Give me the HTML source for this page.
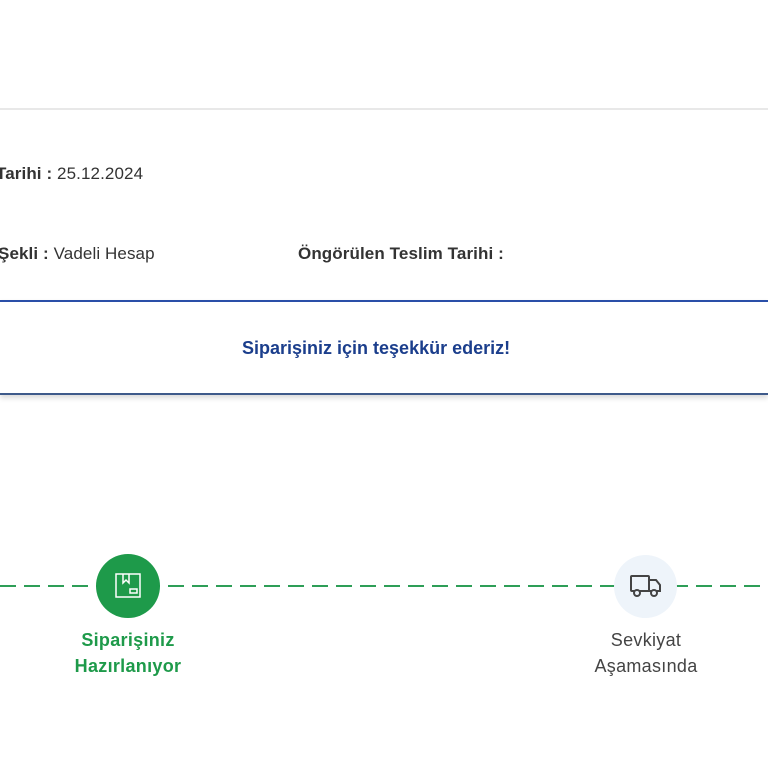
<!DOCTYPE html>
<html><head><meta charset="utf-8"><style>
body{margin:0;width:768px;height:768px;background:#fff;position:relative;overflow:hidden;font-family:"Liberation Sans",sans-serif;color:#333}
.t{position:absolute;font-size:17px;white-space:nowrap}
b{font-weight:bold;color:#333}
</style></head><body>
<div style="position:absolute;left:0;top:108px;width:768px;height:2px;background:#e8e8e8"></div>
<div class="t" style="left:-4px;top:164px;letter-spacing:0.1px"><b>Tarihi :</b> 25.12.2024</div>
<div class="t" style="left:-2px;top:244px;letter-spacing:0.1px"><b>Şekli :</b> Vadeli Hesap</div>
<div class="t" style="left:298px;top:244px;letter-spacing:0.1px"><b>Öngörülen Teslim Tarihi :</b></div>
<div style="position:absolute;left:0;top:300px;width:768px;height:91px;border-top:2px solid #2a4fa8;border-bottom:2px solid #3e5a8a;box-shadow:0 3px 5px rgba(0,0,0,0.15)"></div>
<div class="t" style="left:242px;top:338px;color:#1b3e8c;font-weight:bold;font-size:18px;letter-spacing:0">Siparişiniz için teşekkür ederiz!</div>
<div style="position:absolute;left:0;top:585px;width:768px;height:2px;background:repeating-linear-gradient(90deg,#2e9e57 0 16px,transparent 16px 24px)"></div>
<div style="position:absolute;left:96px;top:554px;width:64px;height:64px;border-radius:50%;background:#1e9a4a"></div>
<svg style="position:absolute;left:114px;top:572px" width="28" height="28" viewBox="0 0 28 28" fill="none" stroke="#fff" stroke-width="1.5"><rect x="2" y="2" width="24" height="23"/><path d="M9 2v9l3-3 3 3V2"/><rect x="16" y="17" width="7" height="4"/></svg>
<div style="position:absolute;left:614px;top:555px;width:63px;height:63px;border-radius:50%;background:#eef4fa"></div>
<svg style="position:absolute;left:629px;top:574px" width="34" height="24" viewBox="0 0 34 24" fill="none" stroke="#444" stroke-width="2"><rect x="2" y="2" width="18" height="15" rx="1"/><path d="M20 6h7l4 5v6h-11z"/><circle cx="8" cy="19" r="3" fill="#eef4fa"/><circle cx="25" cy="19" r="3" fill="#eef4fa"/></svg>
<div class="t" style="left:48px;top:627px;width:160px;text-align:center;color:#1e9a4a;font-weight:bold;font-size:18px;line-height:26px;letter-spacing:0.3px">Siparişiniz<br>Hazırlanıyor</div>
<div class="t" style="left:566px;top:627px;width:160px;text-align:center;color:#444;font-size:18px;line-height:26px;letter-spacing:0.3px">Sevkiyat<br>Aşamasında</div>
</body></html>
